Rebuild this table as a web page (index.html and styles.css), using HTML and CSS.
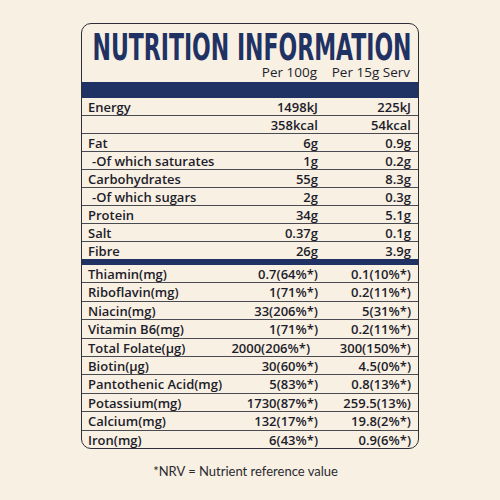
FILE: index.html
```html
<!DOCTYPE html>
<html>
<head>
    <title>Nutrition Information</title>
    <link rel="stylesheet" href="styles.css">
</head>
<body>

<div class="card">
    <svg class="title" width="336" height="40" viewBox="0 0 336 40">
        <text x="10.5" y="36" textLength="319" lengthAdjust="spacingAndGlyphs">NUTRITION INFORMATION</text>
    </svg>
    <div class="row head">
        <div></div>
        <div>Per 100g</div>
        <div>Per 15g Serv</div>
    </div>
    <div class="band"></div>

    <div class="macro">
        <div class="row"><div>Energy</div><div>1498kJ</div><div>225kJ</div></div>
        <div class="row"><div></div><div>358kcal</div><div>54kcal</div></div>
        <div class="row"><div>Fat</div><div>6g</div><div>0.9g</div></div>
        <div class="row"><div class="sub">-Of which saturates</div><div>1g</div><div>0.2g</div></div>
        <div class="row"><div>Carbohydrates</div><div>55g</div><div>8.3g</div></div>
        <div class="row"><div class="sub">-Of which sugars</div><div>2g</div><div>0.3g</div></div>
        <div class="row"><div>Protein</div><div>34g</div><div>5.1g</div></div>
        <div class="row"><div>Salt</div><div>0.37g</div><div>0.1g</div></div>
        <div class="row"><div>Fibre</div><div>26g</div><div>3.9g</div></div>
    </div>

    <div class="band thin"></div>

    <div class="micro">
        <div class="row"><div>Thiamin(mg)</div><div>0.7(64%*)</div><div>0.1(10%*)</div></div>
        <div class="row"><div>Riboflavin(mg)</div><div>1(71%*)</div><div>0.2(11%*)</div></div>
        <div class="row"><div>Niacin(mg)</div><div>33(206%*)</div><div>5(31%*)</div></div>
        <div class="row"><div>Vitamin B6(mg)</div><div>1(71%*)</div><div>0.2(11%*)</div></div>
        <div class="row"><div>Total Folate(µg)</div><div class="wide">2000(206%*)</div><div>300(150%*)</div></div>
        <div class="row"><div>Biotin(µg)</div><div>30(60%*)</div><div>4.5(0%*)</div></div>
        <div class="row"><div>Pantothenic Acid(mg)</div><div>5(83%*)</div><div>0.8(13%*)</div></div>
        <div class="row"><div>Potassium(mg)</div><div>1730(87%*)</div><div>259.5(13%)</div></div>
        <div class="row"><div>Calcium(mg)</div><div>132(17%*)</div><div>19.8(2%*)</div></div>
        <div class="row"><div>Iron(mg)</div><div>6(43%*)</div><div>0.9(6%*)</div></div>
    </div>
</div>

<p class="note">*NRV = Nutrient reference value</p>

</body>
</html>
```

FILE: styles.css
```css
body{
    margin: 0;
    background: #f8f0e3;
    font-family: "Open Sans", "Lato", sans-serif;
    color: #1d1d2b;
}

.card{
    width: 336px;
    margin: 23px 0 0 81px;
    border: 1.5px solid #2e2e38;
    border-radius: 10px;
    overflow: hidden;
}

.title{
    display: block;
    overflow: visible;
}
.title text{
    font-family: "DejaVu Sans", sans-serif;
    font-weight: bold;
    font-stretch: condensed;
    font-size: 37px;
    fill: #1f3263;
}

.row{
    display: grid;
    grid-template-columns: 1fr 96px 93px;
    padding: 0 7px 0 6px;
    font-size: 13px;
    font-weight: 600;
    height: 17px;
    line-height: 18px;
    border-bottom: 1px solid #4a4a52;
    white-space: nowrap;
}
.row > div + div{
    text-align: right;
}
.row .sub{
    padding-left: 4px;
}

.head{
    height: 18px;
    line-height: 17px;
    border-bottom: none;
    font-size: 13.5px;
    font-weight: 500;
    padding-right: 8px;
}

.band{
    height: 16px;
    background: #1f3263;
}
.band.thin{
    height: 6px;
}

.macro .row:last-child,
.micro .row:last-child{
    border-bottom: none;
}

.micro .row{
    height: 17.4px;
    line-height: 18px;
}
.micro .row .wide{
    padding-right: 8px;
}

.note{
    margin: 14px 0 0 0;
    padding-right: 9px;
    text-align: center;
    font-family: "Lato", sans-serif;
    font-size: 13px;
    color: #2a2a30;
}
```
